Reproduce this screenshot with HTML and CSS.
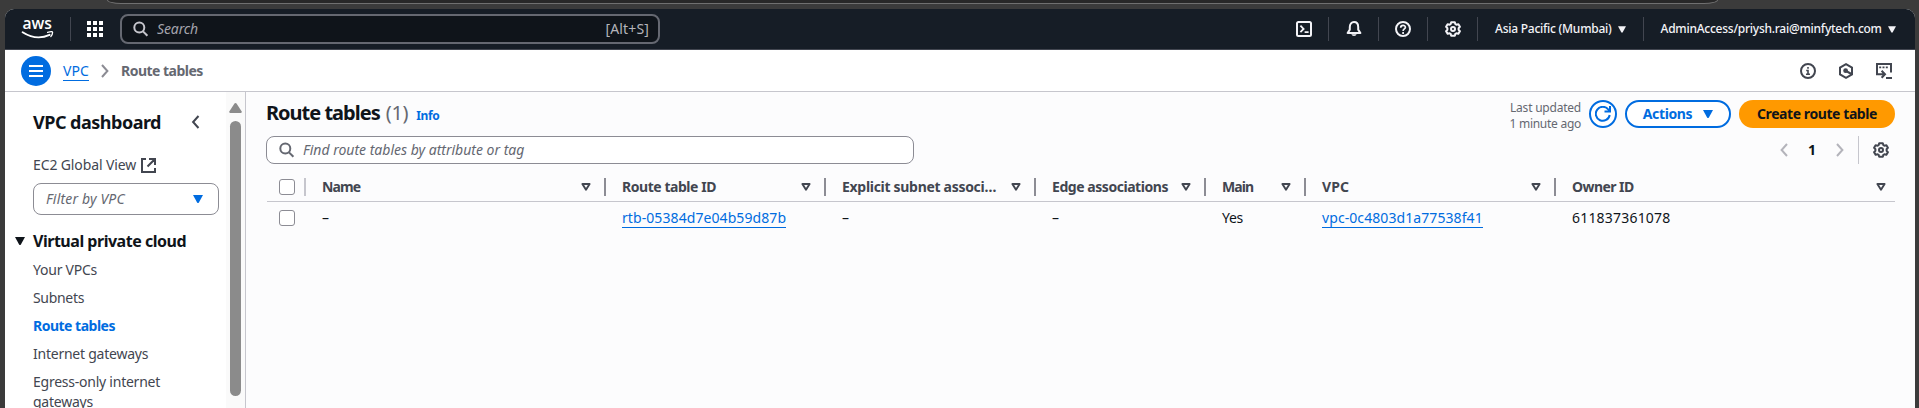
FILE: index.html
```html
<!DOCTYPE html>
<html lang="en">
<head>
<meta charset="utf-8">
<title>Route tables | VPC Console</title>
<link rel="stylesheet" href="styles.css">
</head>
<body>
<svg width="0" height="0" class="defs">
  <symbol id="search" viewBox="0 0 16 16"><circle cx="6.3" cy="6.6" r="5" fill="none" stroke="currentColor" stroke-width="2"/><path d="M10 10.400l4.400 4.400" stroke="currentColor" stroke-width="2"/></symbol>
  <symbol id="gear" viewBox="0 0 16 16"><g fill="none" stroke="currentColor" stroke-width="2" stroke-linejoin="round"><path d="M6.2 1.2h3.6l.5 1.9 1.1.6 2-.5 1.5 2.6-1.3 1.4v1.6l1.3 1.4-1.5 2.6-2-.5-1.1.6-.5 1.900H6.200l-.5-1.900-1.100-.6-2 .5-1.500-2.600 1.300-1.400V7.200L1.100 5.800l1.500-2.600 2 .5 1.100-.6z"/><circle cx="8" cy="8" r="2"/></g></symbol>
  <symbol id="caret" viewBox="0 0 10 8"><path d="M0 0h10L5.9 7.4Q5 8.6 4.1 7.4z" fill="currentColor"/></symbol>
  <symbol id="sort" viewBox="0 0 10 8"><path d="M1.4 1h7.2L5 6.8z" fill="none" stroke="currentColor" stroke-width="1.9" stroke-linejoin="round"/></symbol>
  <symbol id="left" viewBox="0 0 8 14"><path d="M7 1L1.6 7 7 13" fill="none" stroke="currentColor" stroke-width="2"/></symbol>
  <symbol id="right" viewBox="0 0 8 14"><path d="M1 1l5.4 6L1 13" fill="none" stroke="currentColor" stroke-width="2"/></symbol>
</svg>

<div class="chrome"><div class="address-bar"></div></div>

<div class="window">
  <header class="topnav">
    <svg class="logo" width="32" height="20" viewBox="0 0 32 20">
      <text x="0.5" y="10.4" textLength="29.5" lengthAdjust="spacingAndGlyphs" class="logo-text">aws</text>
      <path d="M.6 13.2Q14.5 22 27.6 15.8" fill="none" stroke="#fff" stroke-width="1.9" stroke-linecap="round"/>
      <path d="M25.6 13.3Q30.6 12 30.6 13.4 30.6 15.4 28.8 17.6" fill="none" stroke="#fff" stroke-width="1.3" stroke-linecap="round"/>
    </svg>
    <span class="sep sep-logo"></span>
    <svg class="apps" width="16" height="16" viewBox="0 0 16 16" fill="#fff"><path d="M0 0h4v4H0zM6 0h4v4H6zM12 0h4v4h-4zM0 6h4v4H0zM6 6h4v4H6zM12 6h4v4h-4zM0 12h4v4H0zM6 12h4v4H6zM12 12h4v4h-4z"/></svg>
    <div class="global-search">
      <svg width="16" height="16"><use href="#search"/></svg>
      <span class="gs-hint">Search</span><span class="gs-key">[Alt+S]</span>
    </div>
    <div class="tools">
      <svg width="16" height="16" viewBox="0 0 16 16" fill="none" stroke="currentColor" stroke-width="2"><rect x="1" y="1" width="14" height="14" rx="1.5"/><path d="M4.400 4.600L7.600 8l-3.200 3.200M8.600 11.200h4" stroke-width="1.800"/></svg>
      <span class="sep"></span>
      <svg width="16" height="16" viewBox="0 0 16 16" fill="none" stroke="currentColor" stroke-width="2"><path d="M1.6 12h12.8L12.2 8.6V6C12.2 3 10.4 1.1 8 1.1S3.8 3 3.8 6v2.6z" stroke-linejoin="round"/><path d="M5.3 13.300a2.800 2.300 0 0 0 5.400 0z" fill="currentColor" stroke="none"/></svg>
      <span class="sep"></span>
      <svg width="16" height="16" viewBox="0 0 16 16" fill="none" stroke="currentColor" stroke-width="2"><circle cx="8" cy="8" r="7"/><path d="M5.700 6.700C5.700 3.500 10.400 3.700 10.400 6.300 10.400 8 8.100 7.900 8.100 10M8.100 11v1.900" stroke-width="1.700"/></svg>
      <span class="sep"></span>
      <svg width="16" height="16"><use href="#gear"/></svg>
      <span class="sep"></span>
    </div>
    <span class="region">Asia Pacific (Mumbai)</span><svg class="nav-caret" width="8" height="7"><use href="#caret"/></svg>
    <span class="sep sep-user"></span>
    <span class="user">AdminAccess/priysh.rai@minfytech.com</span><svg class="nav-caret" width="8" height="7"><use href="#caret"/></svg>
  </header>

  <nav class="crumbs">
    <button class="menu"><svg width="14" height="12" viewBox="0 0 14 12" stroke="#fff" stroke-width="2"><path d="M0 1h14M0 6h14M0 11h14"/></svg></button>
    <a class="crumb-link">VPC</a>
    <svg class="crumb-sep" width="8" height="14"><use href="#right"/></svg>
    <span class="crumb-current">Route tables</span>
    <div class="page-tools">
      <svg width="16" height="16" viewBox="0 0 16 16" fill="none" stroke="currentColor" stroke-width="2"><circle cx="8" cy="8" r="7"/><path d="M8 4v1.800M6.200 7.500H8v3.500M6 11.300h4" stroke-width="1.600"/></svg>
      <svg width="16" height="16" viewBox="0 0 16 16" fill="none" stroke="currentColor" stroke-width="2"><path d="M8 1.200l6 3.400v6.800l-6 3.400-6-3.400V4.600z"/><circle cx="7.600" cy="7.700" r="2.400" fill="currentColor" stroke="none"/><path d="M8 8l5.500 3"/></svg>
      <svg width="16" height="16" viewBox="0 0 16 16" fill="none" stroke="currentColor" stroke-width="2"><path d="M1 12V1h14v8.500M0 11.200h8M5.600 7.700L9 11.200l-3.400 3.500"/><path d="M10 15h6"/><path d="M3.200 4.300h2M6.500 4.300h2M9.800 4.300h2" stroke-width="1.800"/></svg>
    </div>
  </nav>

  <div class="body">
    <aside class="side">
      <div class="side-content">
        <div class="side-head"><h2>VPC dashboard</h2><svg width="9" height="14"><use href="#left"/></svg></div>
        <a class="side-ext">EC2 Global View <svg width="15" height="15" viewBox="0 0 15 15" fill="none" stroke="currentColor" stroke-width="2"><path d="M5 1H1v13h13v-4M8 1h6v6M14 1L6.500 8.500"/></svg></a>
        <div class="vpc-filter"><span>Filter by VPC</span><svg width="10" height="8"><use href="#caret"/></svg></div>
        <h3><svg width="10" height="8"><use href="#caret"/></svg><span>Virtual private cloud</span></h3>
        <ul>
          <li>Your VPCs</li>
          <li class="subnets">Subnets</li>
          <li class="active">Route tables</li>
          <li>Internet gateways</li>
          <li>Egress-only internet<br>gateways</li>
        </ul>
      </div>
      <div class="scrollbar"><svg width="13" height="10" viewBox="0 0 13 10"><path d="M6.500 0Q7.200 0 7.700.700L12.700 8.400Q13 10 11.500 10H1.500Q0 10 .3 8.400L5.300.7Q5.800 0 6.500 0z" fill="#8b8b8b"/></svg><div class="thumb"></div></div>
    </aside>

    <main>
      <div class="title-row">
        <h1>Route tables</h1><span class="count">(1)</span><a class="info">Info</a>
        <div class="updated"><span>Last updated</span><span class="ago">1 minute ago</span></div>
        <button class="refresh"><svg width="16" height="16" viewBox="0 0 16 16" fill="none" stroke="currentColor" stroke-width="2"><path d="M14.700 9A7 7 0 1 1 13.300 3.500L14.700 5.200"/><path d="M15 0v5.500H9.500"/></svg></button>
        <button class="actions"><span>Actions</span><svg width="10" height="8"><use href="#caret"/></svg></button>
        <button class="create">Create route table</button>
      </div>
      <div class="filter-row">
        <div class="filter"><svg width="16" height="16"><use href="#search"/></svg><span>Find route tables by attribute or tag</span></div>
        <div class="pager">
          <svg width="8" height="14"><use href="#left"/></svg><b>1</b><svg width="8" height="14"><use href="#right"/></svg>
          <span class="pager-sep"></span>
          <svg class="prefs" width="16" height="16"><use href="#gear"/></svg>
        </div>
      </div>
      <div class="grid head">
        <div class="check"><i></i></div>
        <div class="name">Name<svg><use href="#sort"/></svg></div>
        <div>Route table ID<svg><use href="#sort"/></svg></div>
        <div class="explicit">Explicit subnet associ…<svg><use href="#sort"/></svg></div>
        <div>Edge associations<svg><use href="#sort"/></svg></div>
        <div class="name">Main<svg><use href="#sort"/></svg></div>
        <div class="vpc">VPC<svg><use href="#sort"/></svg></div>
        <div class="owner">Owner ID<svg><use href="#sort"/></svg></div>
      </div>
      <div class="grid row">
        <div class="check"><i></i></div>
        <div>–</div>
        <div><a class="rtb">rtb-05384d7e04b59d87b</a></div>
        <div>–</div>
        <div>–</div>
        <div class="yes">Yes</div>
        <div><a class="vpc-id">vpc-0c4803d1a77538f41</a></div>
        <div class="owner-id">611837361078</div>
      </div>
    </main>
  </div>
</div>
</body>
</html>
```
FILE: styles.css
```css
* { box-sizing: border-box; }
html, body { height: 100%; margin: 0; }
body {
  background: #3b3b3b;
  overflow: hidden;
  font: 14px/20px "Noto Sans", "Open Sans", sans-serif;
  color: #0f141a;
}
svg { display: block; flex: none; }
.defs { display: none; }
h1, h2, h3, ul { margin: 0; padding: 0; }
button { display: flex; align-items: center; justify-content: center; padding: 0; font: inherit; flex: none; }
a, span, h1, h2, h3 { white-space: nowrap; }

.chrome { height: 9px; padding: 0 201px 0 107px; }
.address-bar { height: 4px; background: #282828; border: solid #707070; border-width: 0 1px 1px; border-radius: 0 0 14px 14px / 0 0 4px 4px; }

.window { margin: 0 4px 0 5px; height: 399px; background: #fcfcfd; border-radius: 9px 9px 0 0; overflow: hidden; display: flex; flex-direction: column; }

.topnav { height: 41px; flex: none; background: #161d26; border-bottom: 1px solid #424650; display: flex; align-items: center; padding-left: 17px; color: #f3f3f7; }
.logo { overflow: visible; }
.logo-text { font: 600 15.500px "Open Sans", sans-serif; fill: #fff; }
.sep { width: 1px; height: 24px; background: #424650; flex: none; }
.sep-logo { margin: 0 16px; }
.global-search { width: 540px; height: 30px; margin-left: 17px; border: 2px solid #656871; border-radius: 8px; background: #0f141a; display: flex; align-items: center; padding: 0 9px 0 11px; color: #c6c6cd; }
.gs-hint { margin-left: 8px; font-style: italic; letter-spacing: -.12px; color: #a4a4ad; }
.gs-key { margin-left: auto; letter-spacing: .14px; color: #b4b4bb; }
.tools { margin-left: 636px; display: flex; align-items: center; gap: 16.300px; }
.region, .user { font-size: 12px; font-weight: 500; letter-spacing: -.25px; }
.region { margin-left: 17px; }
.nav-caret { margin-left: 6px; }
.sep-user { margin: 0 17px; }

.crumbs { height: 42px; flex: none; background: #fff; border-bottom: 1px solid #c6c6cd; display: flex; align-items: center; padding: 0 23px 0 16px; }
.menu { width: 30px; height: 30px; border: 0; border-radius: 50%; background: #006ce0; }
.crumb-link { margin-left: 12px; color: #006ce0; letter-spacing: .09px; line-height: 19px; border-bottom: 1px solid #006ce0; }
.crumb-sep { margin: 0 12px; color: #8c8c94; }
.crumb-current { font-weight: 700; color: #656871; letter-spacing: -.52px; }
.page-tools { margin-left: auto; display: flex; gap: 22px; color: #424650; }

.body { flex: 1; display: flex; min-height: 0; }
.side { width: 241px; flex: none; background: #fff; border-right: 1px solid #c6c6cd; display: flex; overflow: hidden; }
.side-content { flex: 1; padding: 18px 7px 0 28px; color: #424650; }
.side-head { display: flex; align-items: center; justify-content: space-between; height: 24px; padding-right: 19px; }
h2 { font-size: 18px; letter-spacing: -.5px; color: #0f141a; }
.side-ext { display: flex; align-items: center; gap: 5px; margin-top: 21px; letter-spacing: -.12px; }
.vpc-filter { height: 32px; margin-top: 8px; border: 1px solid #8c8c94; border-radius: 8px; display: flex; align-items: center; justify-content: space-between; padding: 0 15px 0 12px; font-style: italic; letter-spacing: .17px; color: #656871; }
.vpc-filter svg { color: #006ce0; }
h3 { margin: 16px 0 0 -18px; display: flex; align-items: center; gap: 8px; font-size: 16px; line-height: 20px; letter-spacing: -.48px; color: #0f141a; }
ul { list-style: none; margin-top: 9px; }
li { margin-bottom: 8px; letter-spacing: -.24px; }
.subnets { letter-spacing: -.32px; }
.active { color: #006ce0; font-weight: 700; letter-spacing: -.5px; }
.scrollbar { width: 19px; background: #fafafa; display: flex; flex-direction: column; align-items: center; padding-top: 11px; }
.thumb { width: 11px; height: 275px; margin-top: 8px; border-radius: 6px; background: #8b8b8b; }

main { flex: 1; padding: 8px 20px 0 20px; min-width: 0; }
.title-row { height: 28px; display: flex; align-items: center; }
h1 { font-size: 20px; letter-spacing: -1px; margin-bottom: 2px; }
.count { font-size: 20px; letter-spacing: -.3px; color: #656871; margin: 0 0 2px 6px; }
.info { font-size: 12px; font-weight: 700; letter-spacing: -.4px; color: #006ce0; margin: 4px 0 0 8px; }
.updated { margin-left: auto; display: flex; flex-direction: column; align-items: flex-end; font-size: 12px; line-height: 16px; letter-spacing: -.22px; color: #656871; padding-top: 4px; }
.ago { letter-spacing: -.27px; }
.refresh { width: 28px; height: 28px; margin: 0 8px; border: 2px solid #006ce0; border-radius: 50%; background: #fff; color: #006ce0; }
.actions { width: 106px; height: 28px; border: 2px solid #006ce0; border-radius: 14px; background: #fff; color: #006ce0; font-weight: 700; letter-spacing: -.36px; gap: 11px; }
.create { width: 156px; height: 28px; margin-left: 8px; border: 0; border-radius: 14px; background: #f90; color: #0f141a; font-weight: 700; letter-spacing: -.42px; }

.filter-row { display: flex; align-items: center; justify-content: space-between; margin-top: 8px; height: 28px; }
.filter { width: 648px; height: 28px; border: 1px solid #8c8c94; border-radius: 8px; background: #fff; display: flex; align-items: center; gap: 8px; padding-left: 12px; color: #656871; font-style: italic; }
.pager { display: flex; align-items: center; color: #b4b4bb; padding-right: 6px; }
.pager b { width: 48px; text-align: center; color: #0f141a; }
.pager-sep { width: 1px; height: 28px; background: #c6c6cd; margin: 0 14px; }
.prefs { color: #424650; }

.grid { margin-left: 1px; display: grid; grid-template-columns: 39px 300px 220px 210px 170px 100px 250px 1fr; }
.grid > div { padding-left: 16px; display: flex; align-items: center; white-space: nowrap; }
.head { height: 30px; margin-top: 8px; padding: 6px 0 5px; border-bottom: 1px solid #c6c6cd; color: #424650; font-weight: 700; letter-spacing: -.45px; }
.head > div { height: 18px; justify-content: space-between; padding-right: 13px; border-right: 2px solid #8c8c94; }
.head > div:last-child { border: 0; padding-right: 9px; }
.head svg { width: 10px; height: 8px; }
.head .name { letter-spacing: -.92px; }
.head .explicit { letter-spacing: -.3px; }
.head .vpc { letter-spacing: .07px; }
.head .owner { letter-spacing: -.55px; }
.grid > .check { padding: 0 0 0 12px; border-color: #c6c6cd; justify-content: flex-start; }
.check i { width: 16px; height: 16px; border: 1px solid #8c8c94; border-radius: 3px; background: #fff; }
.row { height: 32px; }
.row a { color: #006ce0; line-height: 18px; border-bottom: 1px solid #006ce0; }
.rtb, .vpc-id { letter-spacing: .08px; }
.yes { letter-spacing: -.27px; }
.owner-id { letter-spacing: .2px; }
```
